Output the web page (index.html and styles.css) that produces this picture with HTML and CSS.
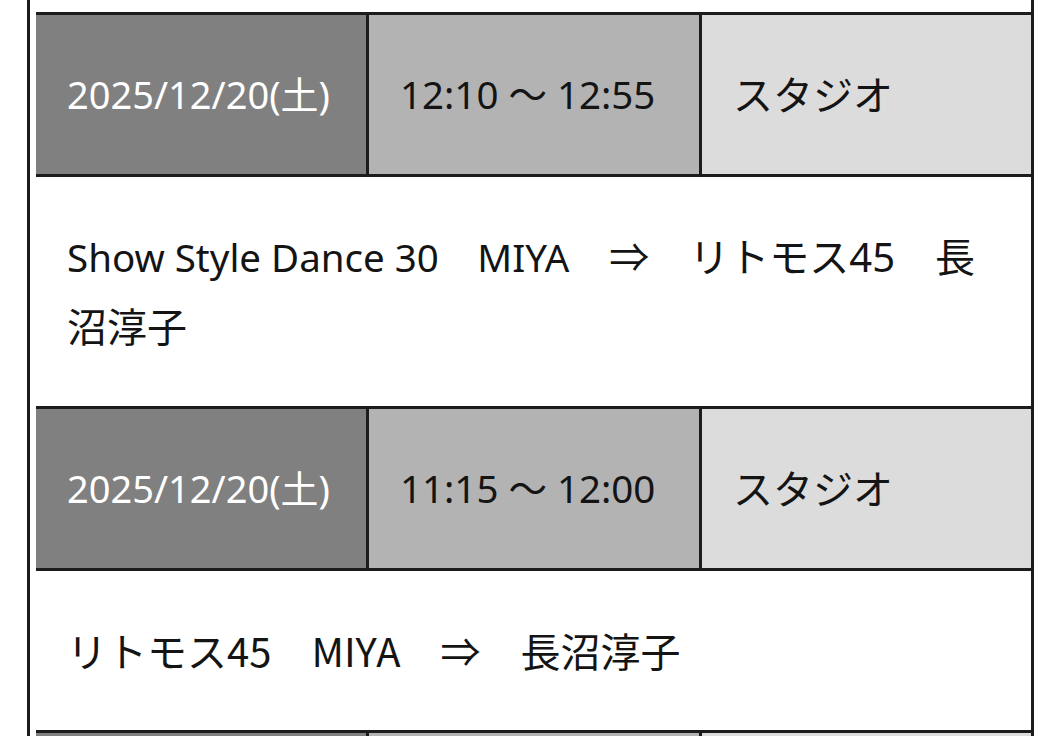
FILE: index.html
```html
<!DOCTYPE html>
<html lang="ja">
<head>
<meta charset="utf-8">
<title>スケジュール</title>
<link rel="stylesheet" href="styles.css">
</head>
<body>
<div class="schedule">
  <div class="row head">
    <div class="cell date">2025/12/20(土)</div>
    <div class="cell time">12:10 〜 12:55</div>
    <div class="cell place">スタジオ</div>
  </div>
  <div class="row body">
    <div class="cell note"><span class="latin">Show Style Dance 30　MIYA</span>　⇒　リトモス45　長沼淳子</div>
  </div>
  <div class="row head">
    <div class="cell date">2025/12/20(土)</div>
    <div class="cell time">11:15 〜 12:00</div>
    <div class="cell place">スタジオ</div>
  </div>
  <div class="row body">
    <div class="cell note jp">リトモス45　MIYA　⇒　長沼淳子</div>
  </div>
  <div class="row head">
    <div class="cell date"></div>
    <div class="cell time"></div>
    <div class="cell place"></div>
  </div>
</div>
</body>
</html>
```

FILE: styles.css
```css
html, body {
  margin: 0;
  padding: 0;
  background: #ffffff;
}

body {
  font-family: "Noto Sans", "Noto Sans CJK JP", sans-serif;
  font-size: 40px;
  color: #141414;
  overflow: hidden;
}

.schedule {
  margin-left: 27px;
  width: 1007px;
  box-sizing: border-box;
  border-left: 3px solid #1c1c1c;
  border-right: 3px solid #1c1c1c;
  padding-left: 6px;
  padding-top: 12px;
}

.row {
  border-top: 3px solid #1c1c1c;
}

.row.head {
  display: grid;
  grid-template-columns: 333px 333px 1fr;
}

.cell {
  padding: 45px 31px;
  line-height: 69px;
  min-height: 159px;
  box-sizing: border-box;
}

.date {
  background: #808080;
  color: #ffffff;
  border-right: 3px solid #1c1c1c;
  white-space: nowrap;
  font-size: 38px;
}

.time {
  background: #b3b3b3;
  border-right: 3px solid #1c1c1c;
  white-space: nowrap;
  font-size: 38.5px;
}

.place {
  background: #dcdcdc;
}

.note {
  background: #ffffff;
}

.latin {
  display: inline-block;
  font-size: 38.5px;
  line-height: 69px;
}

.note.jp {
  font-family: "Noto Sans CJK JP", sans-serif;
}
```
